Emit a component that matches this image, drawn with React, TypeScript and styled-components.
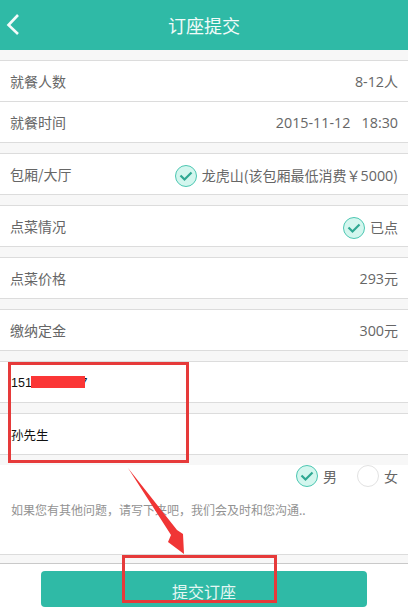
import React from "react";
import styled, { createGlobalStyle } from "styled-components";

const GlobalStyle = createGlobalStyle`
  html, body {
    margin: 0;
    padding: 0;
    background: #f7f7f7;
  }
  body {
    font-family: "Noto Sans CJK SC", "Open Sans", sans-serif;
  }
`;

const Page = styled.div`
  position: relative;
  width: 408px;
  height: 611px;
  overflow: hidden;
  background: #f7f7f7;
`;

const Header = styled.div`
  position: relative;
  height: 50px;
  margin-bottom: 10px;
  display: flex;
  align-items: center;
  justify-content: center;
  background: #2fbaa6;
  color: #f2fbf9;
  font-size: 18px;
`;

const BackIcon = styled.svg`
  position: absolute;
  left: 6px;
  top: 13px;
`;

const Group = styled.div`
  margin-bottom: 10px;
  background: #fff;
  border-top: 1px solid #dcdcdc;
`;

const NotesGroup = styled(Group)`
  margin-bottom: 8px;
`;

const Row = styled.div`
  height: 40px;
  padding: 0 10px;
  display: flex;
  align-items: center;
  justify-content: space-between;
  border-bottom: 1px solid #dcdcdc;
  color: #666;
  font-size: 14px;
`;

const Value = styled.div`
  display: flex;
  align-items: center;
  gap: 5px;
  white-space: pre;
`;

const CheckedValue = styled(Value)`
  margin-top: 2px;
`;

const Digits = styled.span`
  font-family: "Open Sans", "Noto Sans CJK SC", sans-serif;
  font-size: 14.3px;
`;

const InputText = styled.div`
  padding-left: 1px;
  margin-top: 1px;
  color: #111;
  font-family: "Liberation Sans", "Noto Sans CJK SC", sans-serif;
  font-size: 12.5px;
`;

const Circle = styled.span<{ $on?: boolean; $low?: boolean }>`
  width: 22px;
  height: 22px;
  box-sizing: border-box;
  margin-top: ${(p) => (p.$low ? "2px" : "0")};
  display: flex;
  align-items: center;
  justify-content: center;
  border-radius: 50%;
  border: 1.5px solid ${(p) => (p.$on ? "#4cc7b2" : "#e2e2e2")};
  background: ${(p) => (p.$on ? "#d3f6ee" : "#fff")};
`;

const Tick = () => (
  <svg width="14" height="12" viewBox="0 0 14 12">
    <path d="M1.5 5.5 L5.5 9.5 L12.5 2.5" fill="none" stroke="#2fa892" strokeWidth="2.2" />
  </svg>
);

const Check = ({ on, low }: { on?: boolean; low?: boolean }) => (
  <Circle $on={on} $low={low}>
    {on && <Tick />}
  </Circle>
);

const Notes = styled.div`
  height: 89px;
  padding: 0 10px 0 11px;
  background: #fff;
  border-bottom: 1px solid #dcdcdc;
`;

const GenderRow = styled.div`
  display: flex;
  justify-content: flex-end;
  margin-top: -1px;
  gap: 20px;
  color: #666;
  font-size: 14px;
`;

const Gender = styled.div`
  display: flex;
  align-items: center;
  gap: 5px;
  height: 22px;
`;

const Remark = styled.div`
  margin-top: 14px;
  color: #929292;
  font-size: 12px;
  line-height: 17px;
  white-space: nowrap;
`;

const Footer = styled.div`
  height: 48px;
  padding-top: 7px;
  padding-left: 41px;
  padding-right: 41px;
  box-sizing: border-box;
  background: #fff;
  border-top: 1px solid #c9c9c9;
`;

const Submit = styled.div`
  height: 36px;
  padding-top: 3px;
  box-sizing: border-box;
  display: flex;
  align-items: center;
  justify-content: center;
  border-radius: 4px;
  background: #2fbaa6;
  color: #e4f7f3;
  font-size: 16px;
`;

/* annotations drawn over the screenshot */
const Frame = styled.div<{ $x: number; $y: number; $w: number; $h: number }>`
  position: absolute;
  left: ${(p) => p.$x}px;
  top: ${(p) => p.$y}px;
  width: ${(p) => p.$w}px;
  height: ${(p) => p.$h}px;
  box-sizing: border-box;
  border: 3px solid #e63a3a;
`;

const Redaction = styled.div`
  position: absolute;
  left: 31px;
  top: 376px;
  width: 54px;
  height: 12px;
  background: #fb3636;
`;

const Arrow = styled.svg`
  position: absolute;
  left: 120px;
  top: 460px;
`;

export default function App() {
  return (
    <>
      <GlobalStyle />
      <Page>
        <Header>
          <BackIcon width="14" height="24" viewBox="0 0 14 24">
            <path d="M12 2 L2.5 12 L12 21" fill="none" stroke="#f4fbfa" strokeWidth="2.6" />
          </BackIcon>
          订座提交
        </Header>

        <Group>
          <Row>
            就餐人数
            <Value>
              <span>
                <Digits>8-12</Digits>人
              </span>
            </Value>
          </Row>
          <Row>
            就餐时间
            <Value>
              <Digits>2015-11-12   18:30</Digits>
            </Value>
          </Row>
        </Group>

        <Group>
          <Row>
            包厢/大厅
            <CheckedValue>
              <Check on low />
              <span>
                龙虎山(该包厢最低消费￥<Digits>5000</Digits>)
              </span>
            </CheckedValue>
          </Row>
        </Group>

        <Group>
          <Row>
            点菜情况
            <CheckedValue>
              <Check on low />
              已点
            </CheckedValue>
          </Row>
        </Group>

        <Group>
          <Row>
            点菜价格
            <Value>
              <span>
                <Digits>293</Digits>元
              </span>
            </Value>
          </Row>
        </Group>

        <Group>
          <Row>
            缴纳定金
            <Value>
              <span>
                <Digits>300</Digits>元
              </span>
            </Value>
          </Row>
        </Group>

        <Group>
          <Row>
            <InputText>15100000007</InputText>
          </Row>
        </Group>

        <Group>
          <Row>
            <InputText>孙先生</InputText>
          </Row>
        </Group>

        <NotesGroup>
          <Notes>
            <GenderRow>
              <Gender>
                <Check on />男
              </Gender>
              <Gender>
                <Check />女
              </Gender>
            </GenderRow>
            <Remark>如果您有其他问题，请写下来吧，我们会及时和您沟通..</Remark>
          </Notes>
        </NotesGroup>

        <Footer>
          <Submit>提交订座</Submit>
        </Footer>

        <Frame $x={8} $y={362} $w={181} $h={101} />
        <Redaction />
        <Arrow width="80" height="100" viewBox="0 0 80 100">
          <path d="M8 8 L57 70 L63 74 L64 94 L48 82 L51 75 Z" fill="#f03535" />
        </Arrow>
        <Frame $x={122} $y={555} $w={155} $h={48} />
      </Page>
    </>
  );
}
